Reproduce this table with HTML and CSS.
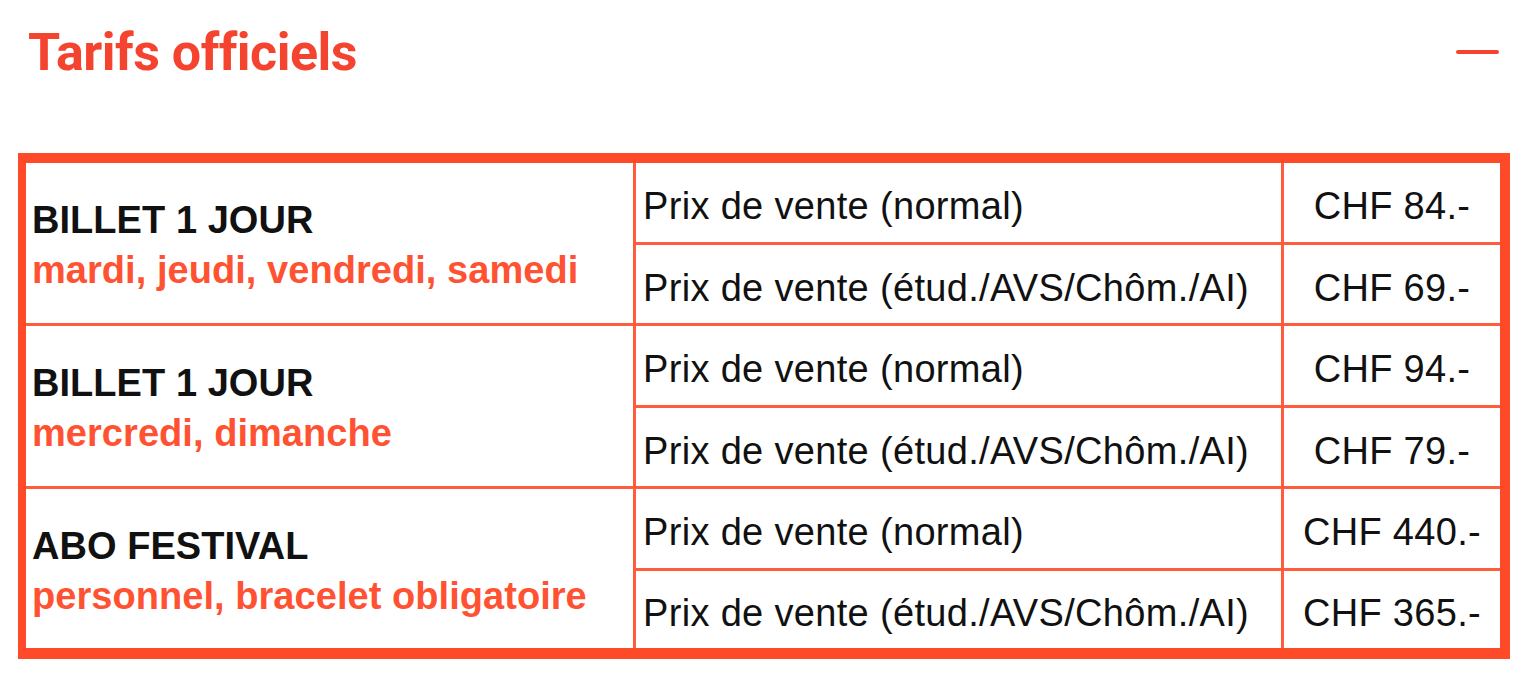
FILE: index.html
```html
<!DOCTYPE html>
<html lang="fr">
<head>
<meta charset="utf-8">
<title>Tarifs officiels</title>
<link rel="stylesheet" href="styles.css">
</head>
<body>
<section class="panel">
  <header class="panel-head">
    <h2 class="title">Tarifs officiels</h2>
    <span class="collapse" aria-label="Réduire"></span>
  </header>
  <div class="prices">
    <div class="cell group g1"><strong class="name">BILLET 1 JOUR</strong><span class="days">mardi, jeudi, vendredi, samedi</span></div>
    <div class="cell label">Prix de vente (normal)</div>
    <div class="cell price">CHF 84.-</div>
    <div class="cell label">Prix de vente (étud./AVS/Chôm./AI)</div>
    <div class="cell price">CHF 69.-</div>

    <div class="cell group g2"><strong class="name">BILLET 1 JOUR</strong><span class="days">mercredi, dimanche</span></div>
    <div class="cell label">Prix de vente (normal)</div>
    <div class="cell price">CHF 94.-</div>
    <div class="cell label">Prix de vente (étud./AVS/Chôm./AI)</div>
    <div class="cell price">CHF 79.-</div>

    <div class="cell group g3"><strong class="name">ABO FESTIVAL</strong><span class="days">personnel, bracelet obligatoire</span></div>
    <div class="cell label">Prix de vente (normal)</div>
    <div class="cell price">CHF 440.-</div>
    <div class="cell label">Prix de vente (étud./AVS/Chôm./AI)</div>
    <div class="cell price">CHF 365.-</div>
  </div>
</section>
</body>
</html>
```
FILE: styles.css
```css
html, body {
  margin: 0;
  padding: 0;
  background: #ffffff;
}

.panel {
  padding: 0 26px 0 18px;
}

.panel-head {
  display: flex;
  justify-content: space-between;
  align-items: center;
  height: 104px;
  padding: 0 11px 0 10px;
}

.title {
  margin: 0;
  padding-top: 2px;
  font-family: Roboto, "Liberation Sans", sans-serif;
  font-weight: 700;
  font-size: 52px;
  line-height: 52px;
  letter-spacing: -0.5px;
  color: #f4432f;
}

.collapse {
  display: block;
  width: 43px;
  height: 4px;
  border-radius: 2px;
  background: #f4432f;
}

.prices {
  margin-top: 49px;
  display: grid;
  grid-template-columns: 607px 645px 1fr;
  grid-template-rows: 79px 78px 79px 78px 79px 77px;
  gap: 3px;
  background: #ff5c3e;
  border-style: solid;
  border-color: #ff4a2a;
  border-width: 10px 10px 11px 8px;
  font-family: "Liberation Sans", Arial, sans-serif;
  font-size: 38px;
  color: #111111;
}

.cell {
  background: #ffffff;
  display: flex;
  align-items: center;
}

.group {
  grid-row: span 2;
  flex-direction: column;
  justify-content: center;
  align-items: flex-start;
  padding: 4px 0 0 6px;
  line-height: 50px;
  letter-spacing: 0.05px;
}

.name {
  font-weight: 700;
}

.days {
  font-weight: 700;
  color: #ff5232;
}

.label {
  padding: 8px 0 0 7px;
  letter-spacing: 0.33px;
}

.price {
  justify-content: center;
  padding-top: 8px;
  letter-spacing: 0.3px;
}
```
